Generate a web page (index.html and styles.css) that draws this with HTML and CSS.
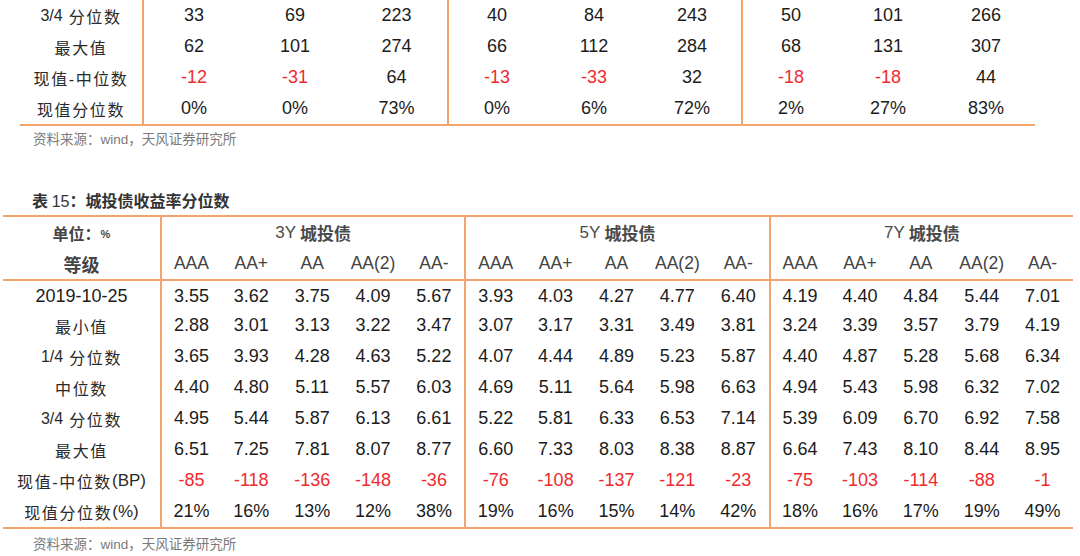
FILE: index.html
```html
<!DOCTYPE html>
<html lang="zh-CN">
<head>
<meta charset="utf-8">
<link rel="stylesheet" href="styles.css">
</head>
<body>
<div class="page">
  <div class="t1">
    <div class="lab"><span class="lat">3/4</span>&nbsp;分位数</div>
    <div class="g">33</div><div>69</div><div>223</div>
    <div class="g">40</div><div>84</div><div>243</div>
    <div class="g">50</div><div>101</div><div>266</div>

    <div class="lab">最大值</div>
    <div class="g">62</div><div>101</div><div>274</div>
    <div class="g">66</div><div>112</div><div>284</div>
    <div class="g">68</div><div>131</div><div>307</div>

    <div class="lab">现值-中位数</div>
    <div class="g neg">-12</div><div class="neg">-31</div><div>64</div>
    <div class="g neg">-13</div><div class="neg">-33</div><div>32</div>
    <div class="g neg">-18</div><div class="neg">-18</div><div>44</div>

    <div class="lab">现值分位数</div>
    <div class="g">0%</div><div>0%</div><div>73%</div>
    <div class="g">0%</div><div>6%</div><div>72%</div>
    <div class="g">2%</div><div>27%</div><div>83%</div>
  </div>
  <p class="src src1">资料来源：wind，天风证券研究所</p>

  <h2 class="title">表 <span class="num">15</span>：城投债收益率分位数</h2>

  <div class="t2">
    <div class="hlab">单位：<span class="pct">%</span></div>
    <div class="g grp span5"><span class="yr">3Y</span> 城投债</div>
    <div class="g grp span5"><span class="yr">5Y</span> 城投债</div>
    <div class="g grp span5"><span class="yr">7Y</span> 城投债</div>

    <div class="hlab big">等级</div>
    <div class="g rt">AAA</div><div class="rt">AA+</div><div class="rt">AA</div><div class="rt">AA(2)</div><div class="rt">AA-</div>
    <div class="g rt">AAA</div><div class="rt">AA+</div><div class="rt">AA</div><div class="rt">AA(2)</div><div class="rt">AA-</div>
    <div class="g rt">AAA</div><div class="rt">AA+</div><div class="rt">AA</div><div class="rt">AA(2)</div><div class="rt">AA-</div>

    <div class="top date">2019-10-25</div>
    <div class="g top">3.55</div><div class="top">3.62</div><div class="top">3.75</div><div class="top">4.09</div><div class="top">5.67</div>
    <div class="g top">3.93</div><div class="top">4.03</div><div class="top">4.27</div><div class="top">4.77</div><div class="top">6.40</div>
    <div class="g top">4.19</div><div class="top">4.40</div><div class="top">4.84</div><div class="top">5.44</div><div class="top">7.01</div>

    <div class="lab">最小值</div>
    <div class="g">2.88</div><div>3.01</div><div>3.13</div><div>3.22</div><div>3.47</div>
    <div class="g">3.07</div><div>3.17</div><div>3.31</div><div>3.49</div><div>3.81</div>
    <div class="g">3.24</div><div>3.39</div><div>3.57</div><div>3.79</div><div>4.19</div>

    <div class="lab"><span class="lat">1/4</span>&nbsp;分位数</div>
    <div class="g">3.65</div><div>3.93</div><div>4.28</div><div>4.63</div><div>5.22</div>
    <div class="g">4.07</div><div>4.44</div><div>4.89</div><div>5.23</div><div>5.87</div>
    <div class="g">4.40</div><div>4.87</div><div>5.28</div><div>5.68</div><div>6.34</div>

    <div class="lab">中位数</div>
    <div class="g">4.40</div><div>4.80</div><div>5.11</div><div>5.57</div><div>6.03</div>
    <div class="g">4.69</div><div>5.11</div><div>5.64</div><div>5.98</div><div>6.63</div>
    <div class="g">4.94</div><div>5.43</div><div>5.98</div><div>6.32</div><div>7.02</div>

    <div class="lab"><span class="lat">3/4</span>&nbsp;分位数</div>
    <div class="g">4.95</div><div>5.44</div><div>5.87</div><div>6.13</div><div>6.61</div>
    <div class="g">5.22</div><div>5.81</div><div>6.33</div><div>6.53</div><div>7.14</div>
    <div class="g">5.39</div><div>6.09</div><div>6.70</div><div>6.92</div><div>7.58</div>

    <div class="lab">最大值</div>
    <div class="g">6.51</div><div>7.25</div><div>7.81</div><div>8.07</div><div>8.77</div>
    <div class="g">6.60</div><div>7.33</div><div>8.03</div><div>8.38</div><div>8.87</div>
    <div class="g">6.64</div><div>7.43</div><div>8.10</div><div>8.44</div><div>8.95</div>

    <div class="lab">现值-中位数<span class="lat big">(BP)</span></div>
    <div class="g neg">-85</div><div class="neg">-118</div><div class="neg">-136</div><div class="neg">-148</div><div class="neg">-36</div>
    <div class="g neg">-76</div><div class="neg">-108</div><div class="neg">-137</div><div class="neg">-121</div><div class="neg">-23</div>
    <div class="g neg">-75</div><div class="neg">-103</div><div class="neg">-114</div><div class="neg">-88</div><div class="neg">-1</div>

    <div class="lab">现值分位数<span class="lat big">(%)</span></div>
    <div class="g">21%</div><div>16%</div><div>13%</div><div>12%</div><div>38%</div>
    <div class="g">19%</div><div>16%</div><div>15%</div><div>14%</div><div>42%</div>
    <div class="g">18%</div><div>16%</div><div>17%</div><div>19%</div><div>49%</div>
  </div>
  <p class="src src2">资料来源：wind，天风证券研究所</p>
</div>
</body>
</html>
```
FILE: styles.css
```css
html, body {
  margin: 0;
  padding: 0;
  background: #ffffff;
}

body {
  font-family: "Liberation Sans", "Noto Sans CJK SC", sans-serif;
  color: #1c1c1c;
  width: 1080px;
  height: 556px;
  overflow: hidden;
}

.page {
  display: flex;
  flex-direction: column;
}

.t1 {
  margin-left: 20px;
  width: 1015px;
  display: grid;
  grid-template-columns: 122px 102px 102px 101px repeat(6, 98px);
  grid-auto-rows: 31px;
  border-bottom: 2px solid #f2a46c;
}

.t1 > div,
.t2 > div {
  display: flex;
  align-items: center;
  justify-content: center;
  font-size: 18px;
  white-space: nowrap;
}

.t1 > div.g,
.t2 > div.g {
  border-left: 2px solid #f2a46c;
}

.t1 > div.lab,
.t2 > div.lab {
  font-family: "Liberation Sans", "Noto Sans CJK SC", sans-serif;
  font-size: 16px;
  letter-spacing: 1.6px;
  color: #2a2a2a;
}

.lab .lat {
  letter-spacing: 0;
}

.lab .lat.big {
  font-size: 17px;
}

.t2 > div.date {
  font-size: 18px;
  color: #1c1c1c;
}

.neg {
  color: #ee2a2e;
}

.src {
  margin: 0;
  font-family: "Liberation Sans", "Noto Sans CJK SC", sans-serif;
  font-size: 13.5px;
  line-height: 20px;
  color: #7a7a7a;
  padding-left: 33px;
}

.src1 {
  margin-top: 4px;
}

.title {
  margin: 40px 0 0 0;
  padding-left: 32px;
  font-family: "Noto Sans CJK SC", "Liberation Sans", sans-serif;
  font-size: 16px;
  font-weight: 700;
  line-height: 20px;
  color: #333333;
}

.title .num {
  font-family: "Liberation Sans", sans-serif;
  font-weight: 400;
}

.t2 {
  margin-top: 3px;
  margin-left: 3px;
  width: 1070px;
  display: grid;
  grid-template-columns: 157px repeat(15, 1fr);
  grid-auto-rows: 31px;
  border-top: 2px solid #f2a46c;
  border-bottom: 2px solid #f2a46c;
}

.t2 > div.top {
  border-top: 2px solid #f2a46c;
  padding-top: 1px;
}

.span5 {
  grid-column: span 5;
}

.t2 > div.hlab {
  font-family: "Noto Sans CJK SC", "Liberation Sans", sans-serif;
  font-weight: 700;
  font-size: 16px;
  color: #444444;
}

.hlab .pct {
  font-family: "Liberation Sans", sans-serif;
  font-size: 11px;
  margin-top: 3px;
}

.t2 > div.hlab.big {
  font-size: 18px;
}

.t2 > div.grp {
  font-family: "Noto Sans CJK SC", "Liberation Sans", sans-serif;
  font-weight: 700;
  font-size: 17px;
  color: #4a4a4a;
}

.grp .yr {
  font-family: "Liberation Sans", sans-serif;
  font-weight: 400;
  margin-right: 4px;
}

.t2 > div.rt {
  font-size: 17.5px;
  color: #444444;
}

.src2 {
  margin-top: 6px;
}
```
